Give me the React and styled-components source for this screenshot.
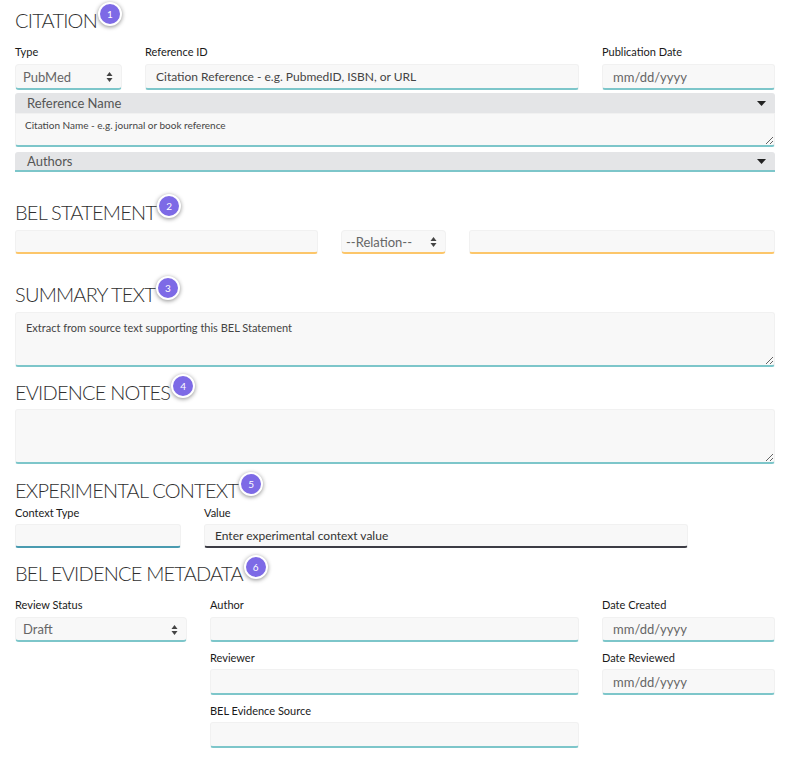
import React from 'react';
import styled, { createGlobalStyle } from 'styled-components';

const GlobalStyle = createGlobalStyle`
  html, body {
    margin: 0;
    padding: 0;
    background: #ffffff;
  }
  body {
    font-family: 'Lato', 'Noto Sans', sans-serif;
    color: #333;
  }
  * { box-sizing: border-box; }
`;

const Page = styled.div`
  width: 800px;
  padding: 8px 25px 20px 15px;
`;

const Section = styled.section`
  margin-top: ${(p) => p.$top || 0}px;
`;

const Heading = styled.h2`
  position: relative;
  display: inline-block;
  margin: 0 0 ${(p) => p.$gap || 6}px 0;
  font-size: 20px;
  line-height: 24px;
  font-weight: 300;
  letter-spacing: -0.8px;
  color: #2f2f2f;
`;

const Badge = styled.span`
  position: absolute;
  top: -6px;
  right: -25px;
  width: 24px;
  height: 24px;
  border-radius: 50%;
  background: #7d6ae6;
  border: 2px solid #fff;
  box-shadow: 0 1px 4px rgba(0, 0, 0, 0.45);
  color: #fff;
  font-size: 10px;
  line-height: 20px;
  text-align: center;
  font-weight: 400;
  letter-spacing: 0;
`;

const Row = styled.div`
  display: grid;
  grid-template-columns: ${(p) => p.$cols};
  column-gap: 23px;
  align-items: start;
`;

const Field = styled.div`
  display: flex;
  flex-direction: column;
  margin-bottom: ${(p) => p.$mb || 0}px;
`;

const Label = styled.label`
  font-size: 11px;
  line-height: 14px;
  font-weight: 400;
  color: #1a1a1a;
  margin-bottom: ${(p) => p.$mb || 5}px;
`;

const accents = {
  teal: '#7dc6ca',
  orange: '#fcc66a',
  dark: '#3d3d45',
  steel: '#4a9bb0',
};

const Input = styled.input`
  width: 100%;
  height: ${(p) => p.$h || 26}px;
  padding: 0 10px;
  background: #f8f8f8;
  border: 1px solid #f1f1f1;
  border-bottom: 2px solid ${(p) => accents[p.$accent || 'teal']};
  border-radius: 3px;
  font-family: inherit;
  font-size: ${(p) => p.$fs || 12}px;
  color: #333;
  outline: none;
  &::placeholder {
    color: ${(p) => p.$ph || '#444'};
  }
`;

const SelectWrap = styled.div`
  position: relative;
  width: 100%;
`;

const Select = styled.select`
  appearance: none;
  -webkit-appearance: none;
  width: 100%;
  height: ${(p) => p.$h || 26}px;
  padding: 0 20px 0 ${(p) => p.$pl || 7}px;
  background: #f8f8f8;
  border: 1px solid #f1f1f1;
  border-bottom: 2px solid ${(p) => accents[p.$accent || 'teal']};
  border-radius: 4px;
  font-family: inherit;
  font-size: 13px;
  color: #666;
  outline: none;
`;

const Arrows = styled.svg`
  position: absolute;
  right: 9px;
  top: 50%;
  transform: translateY(-50%);
  pointer-events: none;
`;

const TextArea = styled.textarea`
  display: block;
  width: 100%;
  height: ${(p) => p.$h || 56}px;
  padding: ${(p) => p.$pad || '8px 10px'};
  background: #f8f8f8;
  border: 1px solid #f1f1f1;
  border-bottom: 2px solid ${accents.teal};
  border-radius: ${(p) => p.$radius || '3px'};
  font-family: inherit;
  font-size: ${(p) => p.$fs || 11}px;
  line-height: 14px;
  resize: vertical;
  outline: none;
  &::placeholder {
    color: #444;
  }
`;

const Collapse = styled.div`
  display: flex;
  align-items: center;
  justify-content: space-between;
  height: 20px;
  padding: 0 9px 0 12px;
  background: #e4e5e7;
  border-radius: 3px 3px 0 0;
  border-bottom: ${(p) => (p.$line ? `2px solid ${accents.teal}` : 'none')};
  font-size: 13px;
  color: #555;
  margin-top: ${(p) => p.$mt || 0}px;
`;

const Stack = styled.div`
  display: flex;
  flex-direction: column;
`;

function UpDown() {
  return (
    <Arrows width="7" height="11" viewBox="0 0 7 11">
      <path d="M3.5 0.5 L6.5 4.5 L0.5 4.5 Z" fill="#444" />
      <path d="M3.5 10.5 L6.5 6.5 L0.5 6.5 Z" fill="#444" />
    </Arrows>
  );
}

function Caret() {
  return (
    <svg width="9" height="5" viewBox="0 0 9 5">
      <path d="M0 0 L9 0 L4.5 5 Z" fill="#222" />
    </svg>
  );
}

function SelectBox({ value, accent, h, pl }) {
  return (
    <SelectWrap>
      <Select $accent={accent} $h={h} $pl={pl} defaultValue={value}>
        <option>{value}</option>
      </Select>
      <UpDown />
    </SelectWrap>
  );
}

export default function App() {
  return (
    <>
      <GlobalStyle />
      <Page>
        <Section>
          <Heading $gap={13}>
            CITATION<Badge>1</Badge>
          </Heading>
          <Row $cols="107px 434px 1fr">
            <Field>
              <Label>Type</Label>
              <SelectBox value="PubMed" />
            </Field>
            <Field>
              <Label>Reference ID</Label>
              <Input placeholder="Citation Reference - e.g. PubmedID, ISBN, or URL" />
            </Field>
            <Field>
              <Label>Publication Date</Label>
              <Input placeholder="mm/dd/yyyy" $fs={13} $ph="#666" />
            </Field>
          </Row>
          <Stack>
            <Collapse $mt={3}>
              Reference Name
              <Caret />
            </Collapse>
            <TextArea
              $h={34}
              $radius="0 0 3px 3px"
              $pad="4px 9px"
              $fs={10}
              placeholder="Citation Name - e.g. journal or book reference"
            />
            <Collapse $mt={5} $line>
              Authors
              <Caret />
            </Collapse>
          </Stack>
        </Section>

        <Section $top={28}>
          <Heading>
            BEL STATEMENT<Badge>2</Badge>
          </Heading>
          <Row $cols="303px 105px 1fr">
            <Input $accent="orange" $h={24} />
            <SelectBox value="--Relation--" accent="orange" h={24} pl={4} />
            <Input $accent="orange" $h={24} />
          </Row>
        </Section>

        <Section $top={28}>
          <Heading>
            SUMMARY TEXT<Badge>3</Badge>
          </Heading>
          <TextArea $h={55} placeholder="Extract from source text supporting this BEL Statement" />
        </Section>

        <Section $top={13}>
          <Heading $gap={5}>
            EVIDENCE NOTES<Badge>4</Badge>
          </Heading>
          <TextArea $h={55} />
        </Section>

        <Section $top={14}>
          <Heading $gap={4}>
            EXPERIMENTAL CONTEXT<Badge>5</Badge>
          </Heading>
          <Row $cols="166px 484px">
            <Field>
              <Label $mb={4}>Context Type</Label>
              <Input $accent="steel" $h={24} />
            </Field>
            <Field>
              <Label $mb={4}>Value</Label>
              <Input $accent="dark" $h={24} placeholder="Enter experimental context value" $ph="#333" />
            </Field>
          </Row>
        </Section>

        <Section $top={13}>
          <Heading $gap={13}>
            BEL EVIDENCE METADATA<Badge>6</Badge>
          </Heading>
          <Row $cols="172px 369px 1fr">
            <Field>
              <Label>Review Status</Label>
              <SelectBox value="Draft" h={25} />
            </Field>
            <Stack>
              <Field $mb={9}>
                <Label>Author</Label>
                <Input $h={25} />
              </Field>
              <Field $mb={9}>
                <Label $mb={4}>Reviewer</Label>
                <Input $h={26} />
              </Field>
              <Field>
                <Label $mb={4}>BEL Evidence Source</Label>
                <Input $h={26} />
              </Field>
            </Stack>
            <Stack>
              <Field $mb={9}>
                <Label>Date Created</Label>
                <Input $h={25} placeholder="mm/dd/yyyy" $fs={13} $ph="#666" />
              </Field>
              <Field>
                <Label $mb={4}>Date Reviewed</Label>
                <Input $h={26} placeholder="mm/dd/yyyy" $fs={13} $ph="#666" />
              </Field>
            </Stack>
          </Row>
        </Section>
      </Page>
    </>
  );
}
